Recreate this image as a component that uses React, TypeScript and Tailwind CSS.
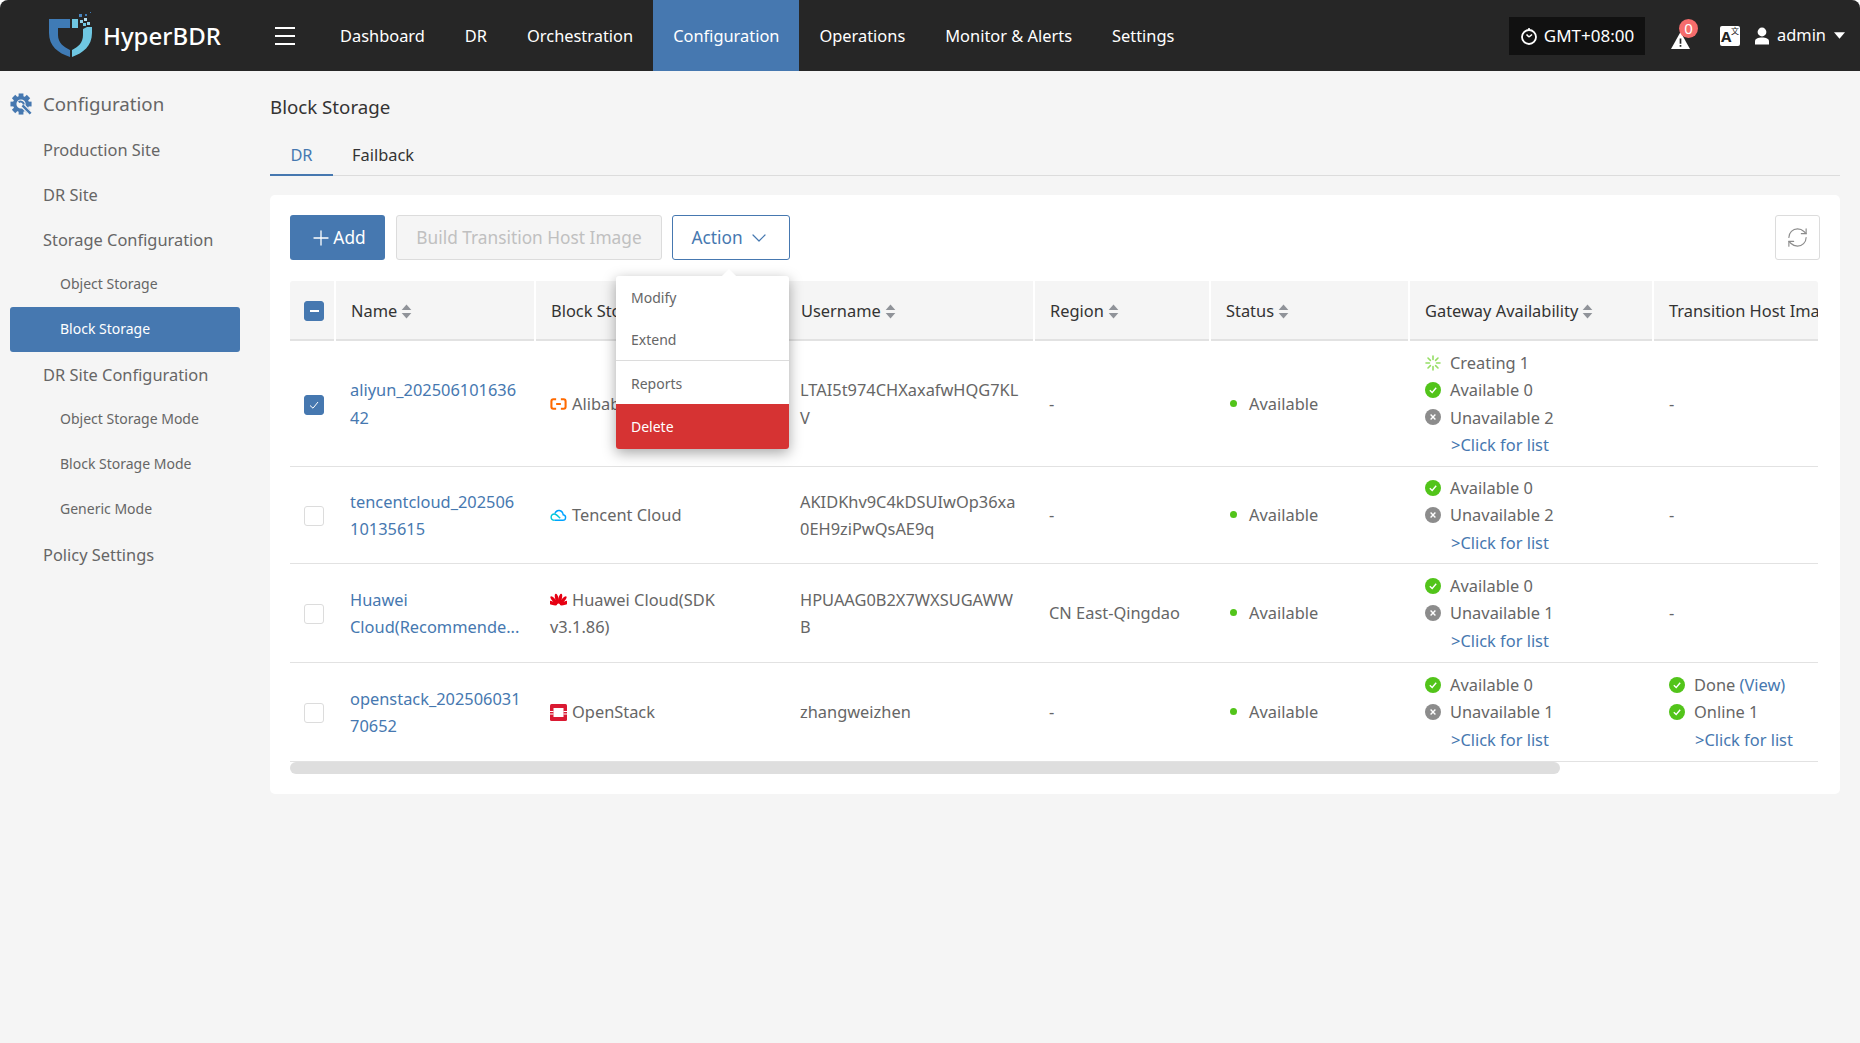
import { ChevronDown, Plus, RefreshCw } from 'lucide-react'

const topNav = ['Dashboard', 'DR', 'Orchestration', 'Configuration', 'Operations', 'Monitor & Alerts', 'Settings']

const sideNav: { name: string; sub?: boolean; active?: boolean }[] = [
  { name: 'Production Site' },
  { name: 'DR Site' },
  { name: 'Storage Configuration' },
  { name: 'Object Storage', sub: true },
  { name: 'Block Storage', sub: true, active: true },
  { name: 'DR Site Configuration' },
  { name: 'Object Storage Mode', sub: true },
  { name: 'Block Storage Mode', sub: true },
  { name: 'Generic Mode', sub: true },
  { name: 'Policy Settings' },
]

const columns: { name: string; sort?: boolean; width: string }[] = [
  { name: 'Name', sort: true, width: 'w-[200px]' },
  { name: 'Block Storage', sort: true, width: 'w-[250px]' },
  { name: 'Username', sort: true, width: 'w-[249px]' },
  { name: 'Region', sort: true, width: 'w-[176px]' },
  { name: 'Status', sort: true, width: 'w-[199px]' },
  { name: 'Gateway Availability', sort: true, width: 'w-[244px]' },
  { name: 'Transition Host Image', width: 'w-[310px]' },
]

const LogoMark = () => (
  <svg viewBox="49 13 45 47" className="h-[47px] w-[45px]">
    <path d="M49 20H70V29H58V36C58 44 64 48 70 51V58C58 54 49 47 49 34Z" fill="#3f7bb6" />
    <path d="M72 20H78V29H72Z" fill="#6fc7e2" />
    <path d="M72 58V51C78 48 83 44 83 36V30L87 28H92V34C92 47 83 54 72 58Z" fill="#6fc7e2" />
    <rect x="80" y="21" width="3" height="3" fill="#8fd0e8" />
    <rect x="84" y="19" width="3" height="3" fill="#b5dcee" />
    <rect x="87" y="23" width="3" height="3" fill="#8fd0e8" />
    <rect x="83" y="24" width="3" height="3" fill="#6fc7e2" />
    <rect x="79" y="15" width="3" height="3" fill="#4a86c0" />
    <rect x="85" y="15" width="2" height="2" fill="#3f7bb6" />
    <rect x="90" y="13" width="1" height="1" fill="#3f7bb6" />
  </svg>
)

// gear with a wrench through it, sidebar header
const GearWrench = () => (
  <svg viewBox="0 0 24 24" className="h-[23px] w-[23px]" fill="none">
    {[0, 45, 90, 135, 180, 225, 270, 315].map((deg) => (
      <rect key={deg} x="9" y="0.5" width="5" height="5" fill="#4678b0" transform={`rotate(${deg} 11.5 11.5)`} />
    ))}
    <circle cx="11.5" cy="11.5" r="6.6" stroke="#4678b0" strokeWidth="3.6" />
    <path d="M13 13 21.5 21.5" stroke="#f5f5f5" strokeWidth="5" />
    <path d="M13 13 21.5 21.5" stroke="#4678b0" strokeWidth="2.6" />
    <path d="M9 9.5A3.6 3.6 0 0 1 14.5 12" stroke="#4678b0" strokeWidth="2.2" />
  </svg>
)

const SortCaret = () => (
  <svg viewBox="0 0 10 14" className="ml-1 inline-block h-[15px] w-[11px] align-[-2px]">
    <path d="M5 0.5 9.5 5.5H0.5Z" fill="#909399" />
    <path d="M5 13.5 0.5 8.5H9.5Z" fill="#909399" />
  </svg>
)

const CheckCircle = () => (
  <svg viewBox="0 0 16 16" className="h-4 w-4 shrink-0">
    <circle cx="8" cy="8" r="8" fill="#52c41a" />
    <path d="M4.8 8.2 7.2 10.4 11.2 5.8" fill="none" stroke="#fff" strokeWidth="1.4" />
  </svg>
)

const CrossCircle = () => (
  <svg viewBox="0 0 16 16" className="h-4 w-4 shrink-0">
    <circle cx="8" cy="8" r="8" fill="#8c8c8c" />
    <path d="M5.6 5.6 10.4 10.4M10.4 5.6 5.6 10.4" fill="none" stroke="#fff" strokeWidth="1.4" />
  </svg>
)

const Spinner = () => (
  <svg viewBox="0 0 16 16" className="h-4 w-4 shrink-0" stroke="#95de64" strokeWidth="1.6" strokeLinecap="round">
    <path d="M8 1V4.5M8 11.5V15M1 8H4.5M11.5 8H15M3 3 5.4 5.4M10.6 10.6 13 13M13 3 10.6 5.4M5.4 10.6 3 13" />
  </svg>
)

const AliIcon = () => (
  <svg viewBox="0 0 18 14" className="mr-[5px] inline-block h-[14px] w-[17px] align-[-1px]">
    <path
      d="M6.5 2H3.5C2.3 2 1.5 2.8 1.5 4V10C1.5 11.2 2.3 12 3.5 12H6.5M11.5 2H14.5C15.7 2 16.5 2.8 16.5 4V10C16.5 11.2 15.7 12 14.5 12H11.5M6.5 7H11.5"
      fill="none"
      stroke="#ff6a00"
      strokeWidth="2.2"
    />
  </svg>
)

const TencentIcon = () => (
  <svg viewBox="0 0 18 14" className="mr-[5px] inline-block h-[14px] w-[17px] align-[-1px]" fill="none" strokeWidth="1.5">
    <path d="M5 12.6H13.6C17.2 12.6 17.6 7.4 14 6.8 13.2 1.6 7 0.4 5.2 5.4" stroke="#00a3ff" />
    <path d="M5 12.6C0 12.6 0 6 4.6 6 6.4 6 7.6 7.4 10.8 10.4" stroke="#00c8dc" />
  </svg>
)

const HuaweiIcon = () => (
  <svg viewBox="0 0 18 14" className="mr-[5px] inline-block h-[14px] w-[17px] align-[-1px]" fill="#e60012">
    {[-72, -42, -14, 14, 42, 72].map((deg) => (
      <ellipse key={deg} cx="9" cy="5.5" rx="1.8" ry="5.4" transform={`rotate(${deg} 9 12.5)`} />
    ))}
  </svg>
)

const OpenStackIcon = () => (
  <svg viewBox="0 0 17 17" className="mr-[5px] inline-block h-[17px] w-[17px] align-[-3px]">
    <rect width="17" height="17" rx="1.5" fill="#da1a32" />
    <rect x="3.5" y="4" width="10" height="9" fill="#fff" />
    <rect x="0" y="7" width="3.5" height="1" fill="#fff" />
    <rect x="13.5" y="7" width="3.5" height="1" fill="#fff" />
    <rect x="0" y="9.5" width="3.5" height="1" fill="#fff" />
    <rect x="13.5" y="9.5" width="3.5" height="1" fill="#fff" />
  </svg>
)

const Check = ({ state }: { state?: 'checked' | 'partial' }) => (
  <span
    className={`ml-[14px] flex h-5 w-5 items-center justify-center rounded-[3px] border ${
      state ? 'border-[#4678b0] bg-[#4678b0]' : 'border-[#dcdcdc] bg-white'
    }`}
  >
    {state === 'partial' && <span className="h-[2px] w-[9px] bg-white" />}
    {state === 'checked' && (
      <svg viewBox="0 0 12 12" className="h-3 w-3">
        <path d="M2 6.5 5 9.2 10 3" fill="none" stroke="#fff" strokeWidth="1" />
      </svg>
    )}
  </span>
)

const StatLine = ({ icon, children }: { icon: React.ReactNode; children: React.ReactNode }) => (
  <div className="flex items-center gap-[9px]">
    {icon}
    <span>{children}</span>
  </div>
)

const ClickList = () => <div className="pl-[26px] text-[#4678b0]">&gt;Click for list</div>

const Gateway = ({ creating, available, unavailable }: { creating?: number; available: number; unavailable: number }) => (
  <div>
    {creating !== undefined && <StatLine icon={<Spinner />}>Creating {creating}</StatLine>}
    <StatLine icon={<CheckCircle />}>Available {available}</StatLine>
    <StatLine icon={<CrossCircle />}>Unavailable {unavailable}</StatLine>
    <ClickList />
  </div>
)

const rows = [
  {
    height: 'h-[126px]',
    check: 'checked' as const,
    name: 'aliyun_202506101636\n42',
    icon: <AliIcon />,
    storage: 'Alibaba Cloud',
    username: 'LTAI5t974CHXaxafwHQG7KL\nV',
    region: '-',
    gateway: <Gateway creating={1} available={0} unavailable={2} />,
    transition: <span>-</span>,
  },
  {
    height: 'h-[97px]',
    name: 'tencentcloud_202506\n10135615',
    icon: <TencentIcon />,
    storage: 'Tencent Cloud',
    username: 'AKIDKhv9C4kDSUIwOp36xa\n0EH9ziPwQsAE9q',
    region: '-',
    gateway: <Gateway available={0} unavailable={2} />,
    transition: <span>-</span>,
  },
  {
    height: 'h-[99px]',
    name: 'Huawei\nCloud(Recommende...',
    icon: <HuaweiIcon />,
    storage: 'Huawei Cloud(SDK\nv3.1.86)',
    username: 'HPUAAG0B2X7WXSUGAWW\nB',
    region: 'CN East-Qingdao',
    gateway: <Gateway available={0} unavailable={1} />,
    transition: <span>-</span>,
  },
  {
    height: 'h-[99px]',
    name: 'openstack_202506031\n70652',
    icon: <OpenStackIcon />,
    storage: 'OpenStack',
    username: 'zhangweizhen',
    region: '-',
    gateway: <Gateway available={0} unavailable={1} />,
    transition: (
      <div>
        <StatLine icon={<CheckCircle />}>
          Done <span className="text-[#4678b0]">(View)</span>
        </StatLine>
        <StatLine icon={<CheckCircle />}>Online 1</StatLine>
        <ClickList />
      </div>
    ),
  },
]

export default function App() {
  return (
    <div className="min-h-[1043px] overflow-hidden rounded-t-lg bg-[#f5f5f5] font-['Noto_Sans',sans-serif] text-[#666]">
      {/* top bar */}
      <header className="flex h-[71px] items-center bg-[#262626] text-white">
        <div className="ml-[49px] flex w-[226px] items-center">
          <LogoMark />
          <span className="ml-[9px] text-[24px] font-medium">HyperBDR</span>
        </div>
        <div className="flex w-[45px] flex-col gap-[6px]">
          <span className="h-[2px] w-5 bg-white" />
          <span className="h-[2px] w-5 bg-white" />
          <span className="h-[2px] w-5 bg-white" />
        </div>
        <nav className="flex h-full">
          {topNav.map((item) => (
            <a
              key={item}
              href="#"
              className={`flex items-center px-5 pt-px text-[16.4px] ${item === 'Configuration' ? 'bg-[#4678b0]' : ''}`}
            >
              {item}
            </a>
          ))}
        </nav>
        <div className="ml-auto flex items-center text-[16.4px]">
          <div className="flex h-[38px] w-[136px] items-center justify-center gap-[6px] bg-[#111] text-[17px]">
            <svg viewBox="0 0 18 18" className="h-[18px] w-[18px]" fill="none" stroke="#fff">
              <circle cx="9" cy="10" r="7" strokeWidth="1.8" />
              <path d="M9 1V3M9 10 6.5 7.5M9 10 12 7.5" strokeWidth="1.6" />
            </svg>
            <span>GMT+08:00</span>
          </div>
          <div className="relative ml-[26px] h-[24px] w-[22px]">
            <svg viewBox="0 0 18 16" className="absolute -bottom-[1px] left-0 h-[17px] w-[19px]">
              <path d="M9 0 18 16H0Z" fill="#fff" />
              <path d="M8.2 6H9.8V11H8.2ZM8.2 12.2H9.8V14H8.2Z" fill="#262626" />
            </svg>
            <span className="absolute -top-[5px] left-[8px] flex h-[19px] w-[19px] items-center justify-center rounded-full bg-[#f56c6c] text-[15px] leading-none">
              0
            </span>
          </div>
          <div className="relative ml-[27px] flex h-5 w-5 items-center justify-start rounded-[2px] bg-white pl-px pt-[2px] text-[15px] font-bold leading-none text-[#222]">
            A
            <span className="absolute right-px top-[1px] font-['Noto_Sans_CJK_SC',sans-serif] text-[8px] font-normal">
              文
            </span>
          </div>
          <svg viewBox="0 0 16 18" className="ml-[14px] h-[18px] w-[16px]" fill="#fff">
            <circle cx="8" cy="5" r="4.4" />
            <path d="M1 17.5V14.5C1 11.5 4 10.5 8 10.5S15 11.5 15 14.5V17.5Z" />
          </svg>
          <span className="ml-[7px]">admin</span>
          <svg viewBox="0 0 10 6" className="ml-[8px] mr-[15px] h-[7px] w-[11px]">
            <path d="M0 0H10L5 6Z" fill="#fff" />
          </svg>
        </div>
      </header>

      <div className="flex">
        {/* side menu */}
        <aside className="w-[270px] shrink-0 pt-[11px]">
          <div className="flex h-[45px] items-center pl-[10px] text-[18.7px]">
            <GearWrench />
            <span className="ml-[10px]">Configuration</span>
          </div>
          {sideNav.map((item) => (
            <a
              key={item.name}
              href="#"
              className={`mx-[10px] flex h-[45px] w-[230px] items-center rounded-[3px] ${
                item.sub ? 'pb-[2px] pl-[50px] text-[14px]' : 'pl-[33px] pt-px text-[16.4px]'
              } ${item.active ? 'bg-[#4678b0] text-white' : ''}`}
            >
              {item.name}
            </a>
          ))}
        </aside>

        <main className="w-[1570px] pt-[22px]">
          <h1 className="text-[18.7px] leading-[28px] text-[#333]">Block Storage</h1>
          <div className="mt-[14px] flex h-[41px] border-b border-[#dcdcdc] text-[16.4px]">
            <a href="#" className="-mb-px flex w-[63px] items-center justify-center border-b-2 border-[#4678b0] pt-px text-[#4678b0]">
              DR
            </a>
            <a href="#" className="flex items-center px-[19px] pt-px text-[#333]">
              Failback
            </a>
          </div>

          <section className="mt-[19px] rounded-[5px] bg-white px-5 pb-5 pt-5">
            {/* toolbar */}
            <div className="flex items-start text-[17.3px]">
              <button className="flex h-[45px] w-[95px] items-center justify-center rounded-[3px] bg-[#4678b0] text-white">
                <Plus className="h-[24px] w-[24px]" strokeWidth={1.3} />
                Add
              </button>
              <button className="ml-[11px] h-[45px] w-[266px] rounded-[3px] border border-[#dcdcdc] bg-[#f5f5f5] text-[#c0c0c0]">
                Build Transition Host Image
              </button>
              <div className="relative ml-[10px]">
                <button className="flex h-[45px] w-[118px] items-center justify-center gap-[4px] rounded-[3px] border border-[#4678b0] text-[#4678b0]">
                  Action
                  <ChevronDown className="h-[24px] w-[24px]" strokeWidth={1.2} />
                </button>
                <div className="absolute -left-[56px] top-[61px] z-10 h-[173px] w-[173px] rounded-[3px] bg-white text-[14px] text-[#666] shadow-[0_4px_14px_rgba(0,0,0,0.35)]">
                  <span className="absolute -top-[5px] left-[108px] h-[10px] w-[10px] rotate-45 bg-white" />
                  <div className="relative">
                    <div className="flex h-[42px] items-center pl-[15px]">Modify</div>
                    <div className="flex h-[43px] items-center border-b border-[#dcdcdc] pl-[15px]">Extend</div>
                    <div className="flex h-[43px] items-center pl-[15px] pt-px">Reports</div>
                    <div className="flex h-[45px] items-center rounded-b-[3px] bg-[#d63333] pl-[15px] text-white">Delete</div>
                  </div>
                </div>
              </div>
              <button className="ml-auto flex h-[45px] w-[45px] items-center justify-center rounded-[3px] border border-[#dcdcdc] text-[#8c8c8c]">
                <RefreshCw className="h-[23px] w-[23px]" strokeWidth={1.2} />
              </button>
            </div>

            {/* table */}
            <div className="mt-[21px] w-[1528px] overflow-hidden rounded-t-[3px]">
              <table className="w-[1673px] table-fixed border-collapse text-left text-[16.4px] leading-[27.3px]">
                <thead>
                  <tr className="h-[59px] border-b-2 border-[#e2e2e2] bg-[#f5f5f5] text-[#333]">
                    <th className="w-[45px] border-r-2 border-white p-0 pt-[2px]">
                      <Check state="partial" />
                    </th>
                    {columns.map((col) => (
                      <th
                        key={col.name}
                        className={`${col.width} whitespace-nowrap border-r-2 border-white px-[15px] pt-[2px] font-normal`}
                      >
                        {col.name}
                        {col.sort && <SortCaret />}
                      </th>
                    ))}
                  </tr>
                </thead>
                <tbody>
                  {rows.map((row) => (
                    <tr key={row.name} className={`${row.height} border-b border-[#e2e2e2]`}>
                      <td className="p-0 pt-[3px]">
                        <Check state={row.check} />
                      </td>
                      <td className="whitespace-pre-line px-[15px] pt-px text-[#4678b0]">{row.name}</td>
                      <td className="whitespace-pre-line px-[15px] pt-px">
                        {row.icon}
                        {row.storage}
                      </td>
                      <td className="whitespace-pre-line px-[15px] pt-px">{row.username}</td>
                      <td className="px-[15px] pt-px">{row.region}</td>
                      <td className="px-[15px] pt-px">
                        <div className="flex items-center pl-[5px]">
                          <span className="h-[7px] w-[7px] rounded-full bg-[#52c41a]" />
                          <span className="ml-[12px]">Available</span>
                        </div>
                      </td>
                      <td className="px-[16px] pt-px">{row.gateway}</td>
                      <td className="px-[16px] pt-px">{row.transition}</td>
                    </tr>
                  ))}
                </tbody>
              </table>
              <div className="h-3 w-[1270px] rounded-full bg-[#dedede]" />
            </div>
          </section>
        </main>
      </div>
    </div>
  )
}
